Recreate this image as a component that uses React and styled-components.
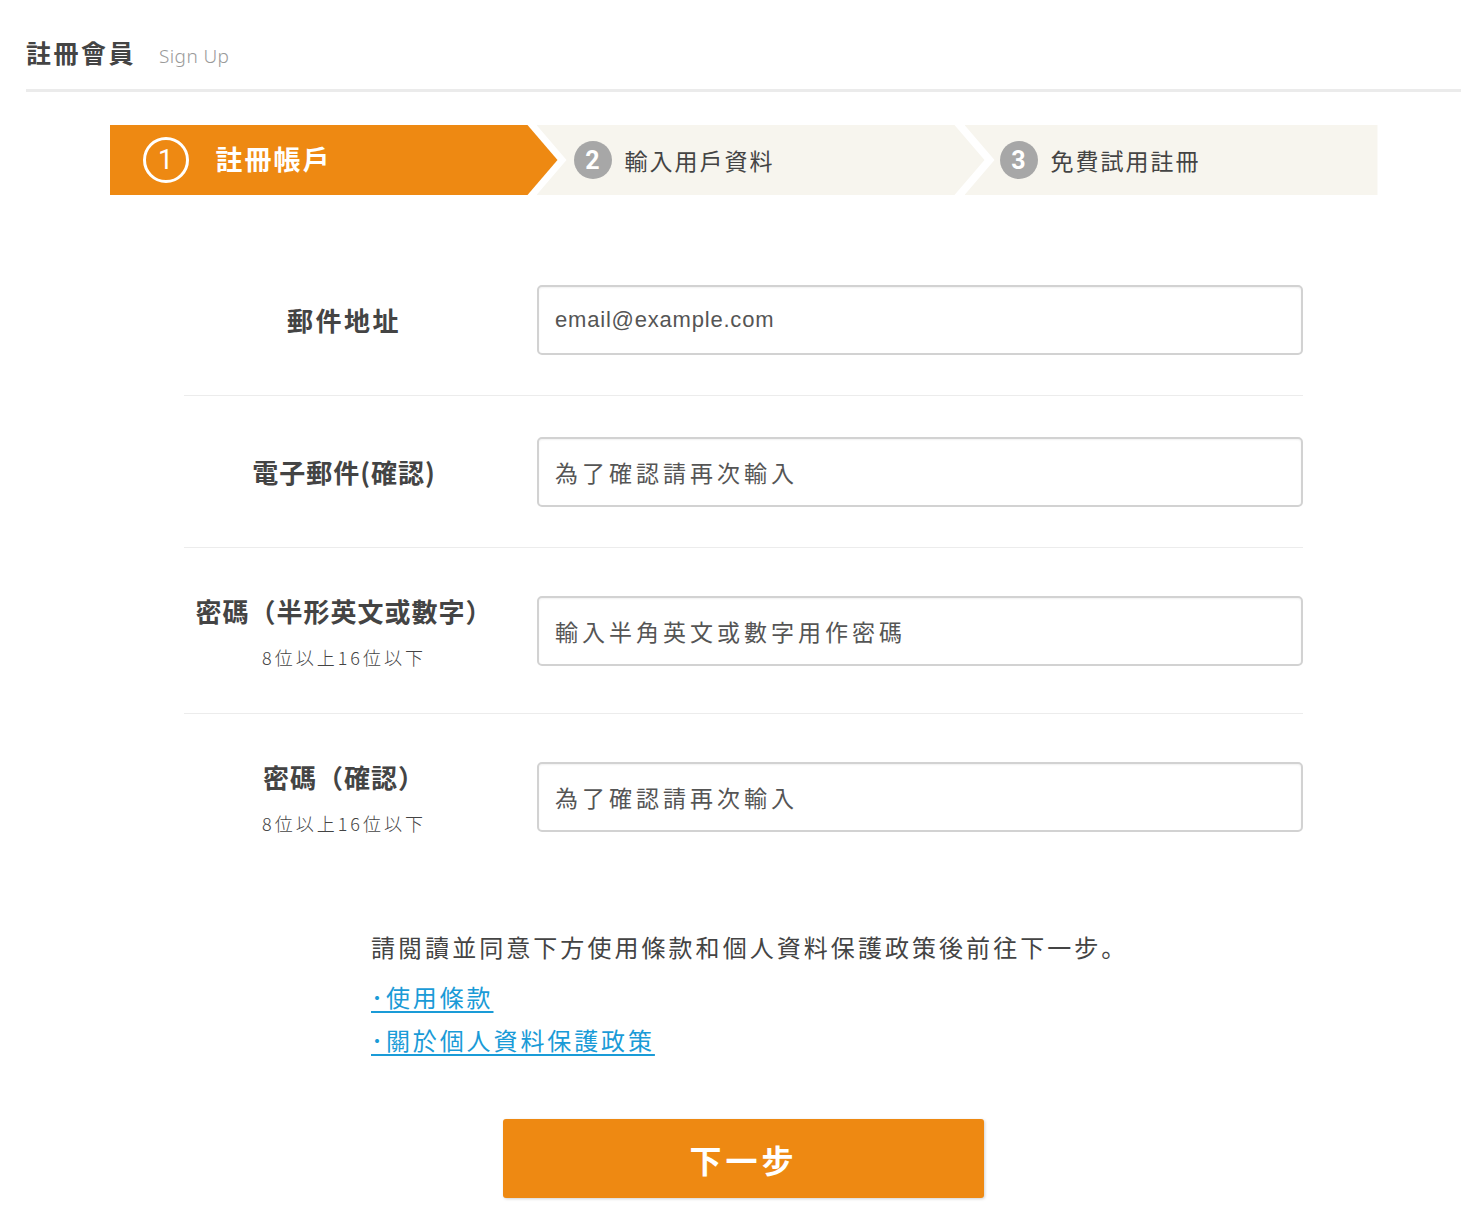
import React from 'react';
import styled, { createGlobalStyle } from 'styled-components';

const GlobalStyle = createGlobalStyle`
    body {
        margin: 0;
        background: #ffffff;
        font-family: "Noto Sans CJK JP", "Noto Sans CJK TC", "Noto Sans", sans-serif;
        color: #444444;
    }
`

const Page = styled.div`
    padding: 30px 0 15px 26px;
`

const Header = styled.div`
    display: flex;
    align-items: baseline;
    padding-bottom: 15px;
    border-bottom: 3px solid #ebebeb;
`

const Title = styled.h1`
    margin: 0;
    font-size: 25px;
    line-height: 44px;
    font-weight: 700;
    letter-spacing: 2.5px;
    color: #444444;
`

const SubTitle = styled.span`
    margin-left: 23px;
    font-family: "Noto Sans", sans-serif;
    font-size: 19px;
    font-weight: 300;
    letter-spacing: 0.4px;
    color: #9a9a9a;
`

const Main = styled.div`
    display: flex;
    flex-direction: column;
    align-items: center;
`

const Steps = styled.div`
    display: flex;
    width: 1268px;
    height: 70px;
    margin-top: 33px;
`

const Step = styled.div`
    display: flex;
    align-items: center;
    flex-shrink: 0;
    height: 100%;
    width: ${p => p.$width}px;
    margin-left: ${p => p.$overlap ? -p.$overlap : 0}px;
    padding-left: ${p => p.$pad}px;
    box-sizing: border-box;
    background: ${p => p.$active ? '#ee8912' : '#f7f5ee'};
    clip-path: ${p => {
        const right = p.$arrow
            ? 'calc(100% - 30px) 0, 100% 50%, calc(100% - 30px) 100%'
            : '100% 0, 100% 100%';
        const left = p.$notch ? ', 0 100%, 30px 50%' : ', 0 100%';
        return `polygon(0 0, ${right}${left})`;
    }};
`

const StepNum = styled.span`
    display: flex;
    align-items: center;
    justify-content: center;
    box-sizing: border-box;
    border-radius: 50%;
    font-family: "Roboto", "Liberation Sans", sans-serif;
    color: #ffffff;
    ${p => p.$active ? `
        width: 46px;
        height: 46px;
        border: 3px solid #ffffff;
        font-size: 27px;
        font-weight: 400;
    ` : `
        width: 38px;
        height: 38px;
        background: #a7a7a7;
        font-size: 25px;
        font-weight: 700;
    `}
`

const StepLabel = styled.span`
    margin-left: ${p => p.$active ? 27 : 13}px;
    font-size: ${p => p.$active ? 27 : 23}px;
    font-weight: ${p => p.$active ? 700 : 400};
    letter-spacing: 2px;
    color: ${p => p.$active ? '#ffffff' : '#444444'};
    margin-top: ${p => p.$active ? -4 : 0}px;
`

const Form = styled.div`
    width: 1119px;
    margin-top: 49px;
`

const Row = styled.div`
    display: grid;
    grid-template-columns: 320px 1fr;
    column-gap: 33px;
    align-items: center;
    padding: 40.5px 0;
    border-top: ${p => p.$first ? 'none' : '1px solid #ececec'};
`

const LabelBox = styled.div`
    display: flex;
    flex-direction: column;
    align-items: center;
`

const Label = styled.label`
    font-size: 26px;
    line-height: 44px;
    font-weight: 700;
    letter-spacing: ${p => p.$wide ? 2.5 : 1}px;
    color: #444444;
    white-space: nowrap;
`

const Note = styled.span`
    margin-top: 8px;
    font-size: 18px;
    line-height: 32px;
    font-weight: 300;
    letter-spacing: 3px;
    color: #444444;
`

const Input = styled.input`
    box-sizing: border-box;
    width: 100%;
    height: 70px;
    padding: 0 16px;
    border: 2px solid #d2d2d2;
    border-radius: 5px;
    box-shadow: inset 0 1px 2px rgba(0, 0, 0, 0.06);
    font-family: ${p => p.$latin ? '"Liberation Sans", sans-serif' : '"Noto Sans CJK JP", "Noto Sans CJK TC", sans-serif'};
    font-size: ${p => p.$latin ? 22 : 23}px;
    letter-spacing: ${p => p.$latin ? 0.8 : 4}px;
    color: #444444;

    &::placeholder {
        color: #555555;
        opacity: 1;
    }

    &:focus {
        outline: none;
    }
`

const Agreement = styled.div`
    margin-top: 48px;
    width: 745px;
`

const AgreeText = styled.p`
    margin: 0 0 8px;
    font-size: 24px;
    line-height: 40px;
    letter-spacing: 3.05px;
    color: #444444;
    white-space: nowrap;
`

const TermLink = styled.a`
    display: block;
    width: fit-content;
    font-size: 24px;
    line-height: 43px;
    letter-spacing: 2.9px;
    color: #1a9bd7;
    text-decoration: underline;
    text-underline-offset: 4px;
    text-decoration-thickness: 2px;
`

const NextButton = styled.button`
    margin-top: 58px;
    width: 481px;
    height: 79px;
    border: none;
    border-radius: 3px;
    background: #ee8912;
    box-shadow: 1px 1px 3px rgba(0, 0, 0, 0.18);
    font-family: "Noto Sans CJK JP", "Noto Sans CJK TC", sans-serif;
    font-size: 32px;
    font-weight: 700;
    letter-spacing: 4px;
    color: #ffffff;
    cursor: pointer;
`

const fields = [
    { label: '郵件地址', placeholder: 'email@example.com', latin: true, wide: true },
    { label: '電子郵件(確認)', placeholder: '為了確認請再次輸入' },
    { label: '密碼（半形英文或數字）', note: '8位以上16位以下', placeholder: '輸入半角英文或數字用作密碼' },
    { label: '密碼（確認）', note: '8位以上16位以下', placeholder: '為了確認請再次輸入' },
]

function App() {
    return (
        <Page>
            <GlobalStyle/>
            <Header>
                <Title>註冊會員</Title>
                <SubTitle>Sign Up</SubTitle>
            </Header>
            <Main>
                <Steps>
                    <Step $active $arrow $width={448} $pad={33}>
                        <StepNum $active>1</StepNum>
                        <StepLabel $active>註冊帳戶</StepLabel>
                    </Step>
                    <Step $arrow $notch $width={448} $overlap={21} $pad={37}>
                        <StepNum>2</StepNum>
                        <StepLabel>輸入用戶資料</StepLabel>
                    </Step>
                    <Step $notch $width={413} $overlap={20} $pad={35}>
                        <StepNum>3</StepNum>
                        <StepLabel>免費試用註冊</StepLabel>
                    </Step>
                </Steps>

                <Form>
                    {fields.map((f, i) => (
                        <Row key={i} $first={i === 0}>
                            <LabelBox>
                                <Label $wide={f.wide}>{f.label}</Label>
                                {f.note && <Note>{f.note}</Note>}
                            </LabelBox>
                            <Input $latin={f.latin} placeholder={f.placeholder}/>
                        </Row>
                    ))}
                </Form>

                <Agreement>
                    <AgreeText>請閱讀並同意下方使用條款和個人資料保護政策後前往下一步。</AgreeText>
                    <TermLink href="#">･使用條款</TermLink>
                    <TermLink href="#">･關於個人資料保護政策</TermLink>
                </Agreement>

                <NextButton>下一步</NextButton>
            </Main>
        </Page>
    )
}

export default App;
